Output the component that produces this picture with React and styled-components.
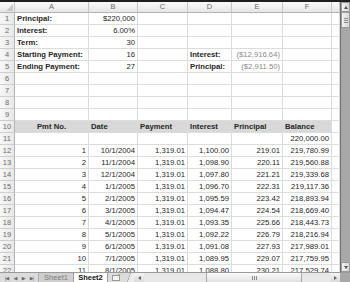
import styled, { createGlobalStyle } from 'styled-components'

const GlobalStyle = createGlobalStyle`
  html, body {
    margin: 0;
    padding: 0;
    background: #ffffff;
  }
  body {
    font-family: "Liberation Sans", Arial, sans-serif;
  }
`

const COLS = ['A', 'B', 'C', 'D', 'E', 'F', '']
const COL_TEMPLATE = '15px 74px 49px 50px 44px 51px 49px 8px'

const Window = styled.div`
  width: 350px;
  height: 282px;
  display: flex;
  flex-direction: column;
  overflow: hidden;
  background: #ffffff;
  border-top: 2px solid #1e1e1e;
  box-sizing: border-box;
`

const Body = styled.div`
  height: 270px;
  display: flex;
  overflow: hidden;
`

const Sheet = styled.div`
  flex: 1;
  display: grid;
  grid-template-columns: ${COL_TEMPLATE};
  grid-auto-rows: 12px;
  grid-template-rows: 11px;
  align-content: start;
  overflow: hidden;
`

const ColHeader = styled.div`
  background: linear-gradient(#fafafa, #e6e6e6);
  border-right: 1px solid #c6c6c6;
  border-bottom: 1px solid #b4b4b4;
  box-sizing: border-box;
  font-size: 7.5px;
  line-height: 10px;
  color: #6a6a6a;
  text-align: center;
`

const Corner = styled(ColHeader)`
  position: relative;
  &::after {
    content: '';
    position: absolute;
    right: 1px;
    bottom: 1px;
    border-left: 7px solid transparent;
    border-bottom: 7px solid #c8c8c8;
  }
`

const RowHeader = styled.div`
  background: linear-gradient(90deg, #f7f7f7, #e8e8e8);
  border-right: 1px solid #b4b4b4;
  border-bottom: 1px solid #cfcfcf;
  box-sizing: border-box;
  font-size: 7.5px;
  line-height: 11px;
  color: #6a6a6a;
  text-align: center;
`

const Cell = styled.div`
  border-right: 1px solid #dcdcdc;
  border-bottom: 1px solid #dcdcdc;
  box-sizing: border-box;
  background: ${p => (p.$fill ? '#d8d8d8' : 'transparent')};
  font-size: 7.7px;
  line-height: 11px;
  padding: 0 2px;
  white-space: nowrap;
  overflow: ${p => (p.$align === 'right' ? 'hidden' : 'visible')};
  text-align: ${p => p.$align || 'left'};
  font-weight: ${p => (p.$bold ? 700 : 400)};
  color: ${p => (p.$muted ? '#8a8a8a' : '#262626')};
`

const VScroll = styled.div`
  width: 10px;
  display: flex;
  flex-direction: column;
  background: #a8a8a8;
  border-left: 1px solid #707070;
  box-sizing: border-box;
`

const ScrollButton = styled.div`
  height: ${p => p.$h || 10}px;
  flex: none;
  background: linear-gradient(90deg, #f2f2f2, #d6d6d6);
  border: 1px solid #9a9a9a;
  box-sizing: border-box;
  display: flex;
  align-items: center;
  justify-content: center;
`

const Track = styled.div`
  flex: 1;
`

const Arrow = styled.span`
  width: 0;
  height: 0;
  border-left: 2.5px solid transparent;
  border-right: 2.5px solid transparent;
  ${p => (p.$dir === 'up'
    ? 'border-bottom: 3px solid #555;'
    : 'border-top: 3px solid #555;')}
`

const SideArrow = styled.span`
  width: 0;
  height: 0;
  border-top: 2.5px solid transparent;
  border-bottom: 2.5px solid transparent;
  ${p => (p.$dir === 'left'
    ? 'border-right: 3px solid #666;'
    : 'border-left: 3px solid #666;')}
`

const Grip = styled.span`
  width: ${p => (p.$horizontal ? '5px' : '4px')};
  height: ${p => (p.$horizontal ? '4px' : '5px')};
  background: ${p => (p.$horizontal
    ? 'repeating-linear-gradient(90deg, #8a8a8a 0 1px, transparent 1px 2px)'
    : 'repeating-linear-gradient(#8a8a8a 0 1px, transparent 1px 2px)')};
`

const TabBar = styled.div`
  height: 10px;
  display: flex;
  align-items: stretch;
  background: #dcdcdc;
  border-top: 1px solid #9a9a9a;
  box-sizing: border-box;
`

const NavGroup = styled.div`
  width: 38px;
  display: flex;
  align-items: center;
  justify-content: space-around;
  padding: 0 2px;
  box-sizing: border-box;
`

const NavGlyph = styled.span`
  font-family: "DejaVu Sans", sans-serif;
  font-size: 5px;
  color: #6a6a6a;
  letter-spacing: -1px;
`

const Tab = styled.div`
  width: ${p => (p.$active ? 34 : 36)}px;
  box-sizing: border-box;
  text-align: center;
  line-height: 9px;
  color: ${p => (p.$active ? '#111' : '#7a7a7a')};
  font-weight: ${p => (p.$active ? 700 : 400)};
  font-size: 7.5px;
  background: ${p => (p.$active ? '#ffffff' : '#cfcfcf')};
  border-right: 1px solid #9a9a9a;
  border-left: ${p => (p.$active ? 'none' : '1px solid #b0b0b0')};
`

const NewSheet = styled.div`
  width: 16px;
  display: flex;
  align-items: center;
  justify-content: center;
`

const Splitter = styled.div`
  width: 10px;
  background: linear-gradient(110deg, #dcdcdc 45%, #9a9a9a 50%, #ececec 55%);
`

const HScroll = styled.div`
  flex: 1;
  display: flex;
  align-items: stretch;
  background: #e4e4e4;
`

const HButton = styled.div`
  width: 10px;
  display: flex;
  align-items: center;
  justify-content: center;
  background: linear-gradient(#f4f4f4, #dadada);
`

const HTrack = styled.div`
  flex: 1;
  display: flex;
  padding-left: 62px;
  padding-right: 28px;
  background: #e8e8e8;
`

const HThumb = styled.div`
  flex: 1;
  display: flex;
  align-items: center;
  justify-content: center;
  background: linear-gradient(#fbfbfb, #e0e0e0);
  border: 1px solid #a8a8a8;
  border-top: none;
  border-bottom: none;
`

const CornerBox = styled.div`
  width: 10px;
  background: #a8a8a8;
`

const c = (text, opts = {}) => ({ text, ...opts })
const R = { align: 'right' }

const topRows = {
  1: [c('Principal:', { bold: true }), c('$220,000', R)],
  2: [c('Interest:', { bold: true }), c('6.00%', R)],
  3: [c('Term:', { bold: true }), c('30', R)],
  4: [c('Starting Payment:', { bold: true }), c('16', R), c(''), c('Interest:', { bold: true }), c('($12,916.64)', { align: 'right', muted: true })],
  5: [c('Ending Payment:', { bold: true }), c('27', R), c(''), c('Principal:', { bold: true }), c('($2,911.50)', { align: 'right', muted: true })],
  10: [
    c('Pmt No.', { bold: true, align: 'center', fill: true }),
    c('Date', { bold: true, fill: true }),
    c('Payment', { bold: true, fill: true }),
    c('Interest', { bold: true, fill: true }),
    c('Principal', { bold: true, fill: true }),
    c('Balance', { bold: true, fill: true }),
  ],
  11: [c(''), c(''), c(''), c(''), c(''), c('220,000.00', R)],
}

const payments = [
  ['10/1/2004', '1,100.00', '219.01', '219,780.99'],
  ['11/1/2004', '1,098.90', '220.11', '219,560.88'],
  ['12/1/2004', '1,097.80', '221.21', '219,339.68'],
  ['1/1/2005', '1,096.70', '222.31', '219,117.36'],
  ['2/1/2005', '1,095.59', '223.42', '218,893.94'],
  ['3/1/2005', '1,094.47', '224.54', '218,669.40'],
  ['4/1/2005', '1,093.35', '225.66', '218,443.73'],
  ['5/1/2005', '1,092.22', '226.79', '218,216.94'],
  ['6/1/2005', '1,091.08', '227.93', '217,989.01'],
  ['7/1/2005', '1,089.95', '229.07', '217,759.95'],
  ['8/1/2005', '1,088.80', '230.21', '217,529.74'],
]

payments.forEach(([date, interest, principal, balance], i) => {
  topRows[12 + i] = [
    c(String(i + 1), R),
    c(date, R),
    c('1,319.01', R),
    c(interest, R),
    c(principal, R),
    c(balance, R),
  ]
})

function SheetGrid() {
  const rows = []
  for (let r = 1; r <= 22; r++) {
    const cells = topRows[r] || []
    rows.push(<RowHeader key={`h${r}`}>{r}</RowHeader>)
    for (let k = 0; k < 7; k++) {
      const cell = cells[k] || {}
      rows.push(
        <Cell
          key={`${r}-${k}`}
          $align={cell.align}
          $bold={cell.bold}
          $muted={cell.muted}
          $fill={cell.fill}
        >
          {cell.text}
        </Cell>
      )
    }
  }
  return (
    <Sheet>
      <Corner />
      {COLS.map((col, i) => <ColHeader key={i}>{col}</ColHeader>)}
      {rows}
    </Sheet>
  )
}

export default function App() {
  return (
    <>
      <GlobalStyle />
      <Window>
        <Body>
          <SheetGrid />
          <VScroll>
            <ScrollButton><Arrow $dir="up" /></ScrollButton>
            <ScrollButton $h={16}><Grip /></ScrollButton>
            <Track />
            <ScrollButton><Arrow $dir="down" /></ScrollButton>
          </VScroll>
        </Body>
        <TabBar>
          <NavGroup>
            <NavGlyph>|◀</NavGlyph>
            <NavGlyph>◀</NavGlyph>
            <NavGlyph>▶</NavGlyph>
            <NavGlyph>▶|</NavGlyph>
          </NavGroup>
          <Tab>Sheet1</Tab>
          <Tab $active>Sheet2</Tab>
          <NewSheet>
            <svg width="9" height="7" viewBox="0 0 9 7">
              <rect x="0.5" y="1.5" width="7" height="5" fill="#f4f4f4" stroke="#9a9a9a" />
              <path d="M6 0.5 L8.5 0.5 M7.3 0 L7.3 2.5" stroke="#c9a23a" strokeWidth="0.8" />
            </svg>
          </NewSheet>
          <Splitter />
          <HScroll>
            <HButton><SideArrow $dir="left" /></HButton>
            <HTrack>
              <HThumb><Grip $horizontal /></HThumb>
            </HTrack>
            <HButton><SideArrow $dir="right" /></HButton>
          </HScroll>
          <CornerBox />
        </TabBar>
      </Window>
    </>
  )
}
